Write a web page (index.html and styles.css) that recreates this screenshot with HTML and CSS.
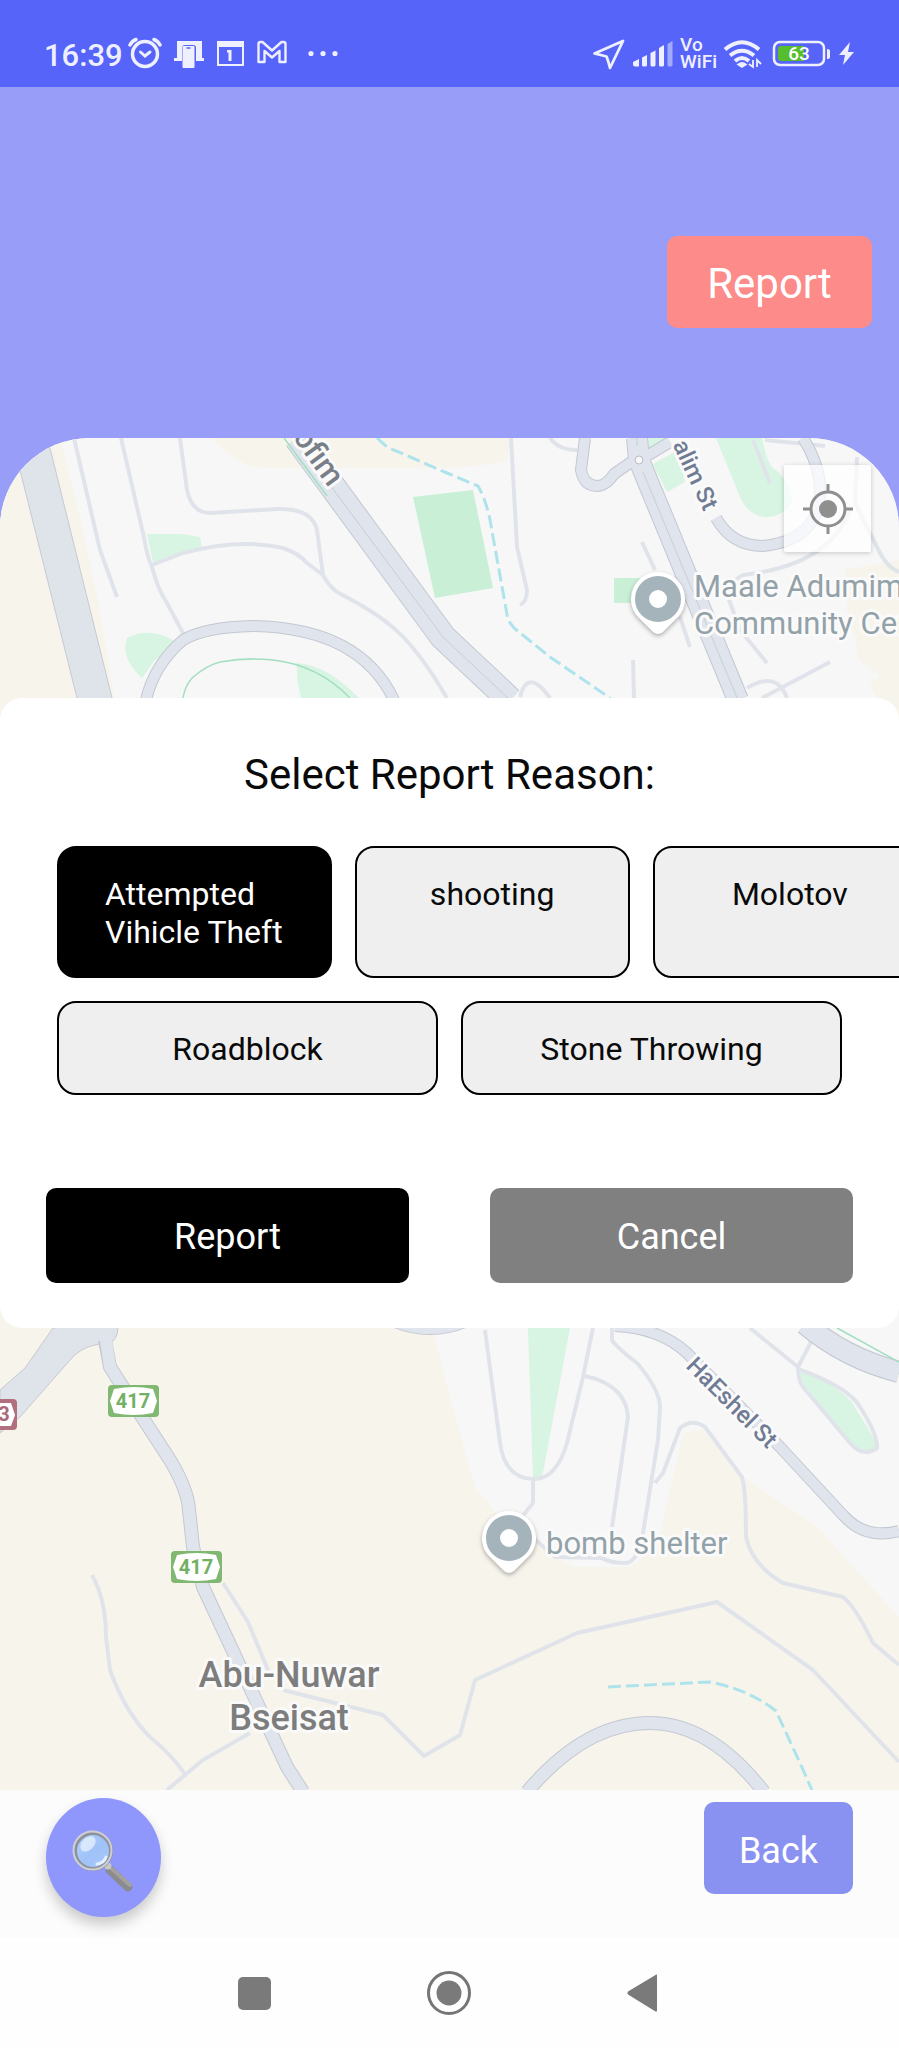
FILE: index.html
```html
<!DOCTYPE html>
<html lang="en">
<head>
<meta charset="utf-8">
<meta name="viewport" content="width=device-width, initial-scale=1">
<title>Report</title>
<link rel="stylesheet" href="styles.css">
</head>
<body>
<div class="screen">
  <div class="status">
    <div class="status-group">
      <span class="clock">16:39</span>
      <svg class="ic" width="34" height="34" viewBox="0 0 34 34" fill="none" stroke="currentColor" stroke-linecap="round"><circle cx="17" cy="18" r="12.500" stroke-width="3.500"/><path d="M12.500 16l4.500 4 5-4" stroke-width="3"/><path d="M2 9q2-4 6-5.500M32 9q-2-4-6-5.500" stroke-width="3.500"/></svg>
      <svg class="ic" width="32" height="34" viewBox="0 0 32 34"><path fill="currentColor" d="M4 5h25v17h2v3H23v-13q0-3-3-3h-8q-3 0-3 3v13H1v-3h3z"/><rect x="9.500" y="10" width="12" height="22" rx="1" fill="currentColor"/><path d="M13.500 12h4" stroke="#5664fa" stroke-width="1.500"/></svg>
      <svg class="ic" width="30" height="34" viewBox="0 0 30 34"><path d="M2 6h25v23H2z" fill="none" stroke="currentColor" stroke-width="2"/><path d="M1 5h27v6H1zM11 14h4.500v11H12.500v-8.500H11z" fill="currentColor"/></svg>
      <svg class="ic" width="30" height="34" viewBox="0 0 30 34"><path d="M1.500 26V8q0-2 2-2h2L15 14.500 24.500 6h2q2 0 2 2v18h-6V15L15 21.500 7.500 15v11z" fill="none" stroke="currentColor" stroke-width="2.400" stroke-linejoin="round"/></svg>
      <svg class="ic dots" width="32" height="34" viewBox="0 0 32 34" fill="currentColor"><circle cx="4" cy="17.500" r="2.600"/><circle cx="16" cy="17.500" r="2.600"/><circle cx="28" cy="17.500" r="2.600"/></svg>
    </div>
    <div class="status-group tight">
      <svg class="ic" width="34" height="34" viewBox="0 0 34 34"><path d="M31 5 L2.500 17.500 Q11 19.500 14.500 20.500 Q16 24 18 32 Z" fill="none" stroke="currentColor" stroke-width="2.800" stroke-linejoin="round"/></svg>
      <svg class="ic" width="40" height="34" viewBox="0 0 40 34" fill="currentColor"><path d="M0 26q4-2 6-3v7.500H2q-2 0-2-2zM9 21.500l5-2.500v10q0 1.500-1.500 1.500h-2Q9 30.500 9 29zM17.500 17l5-2.500V29q0 1.500-1.500 1.500h-2q-1.500 0-1.500-1.500zM26 12l5-3v20q0 1.500-1.500 1.500h-2Q26 30.500 26 29z"/><path opacity=".5" d="M34.500 8l5-3v24q0 1.500-1.500 1.500h-2q-1.500 0-1.500-1.500z"/></svg>
      <span class="vowifi"><span>Vo</span><span>WiFi</span></span>
      <svg class="ic" width="42" height="34" viewBox="0 0 42 34" fill="none" stroke="currentColor" stroke-width="4"><path d="M3 13.500Q20 -1 37 13.500M8 19.500q12-9.500 24 0M13 25q7-6 14 0"/><path d="M14.500 28.500q5.500-5 11 0L20 32z" fill="currentColor" stroke="none"/><path d="M31 24v7l-4-3M35 31v-7l4 4" stroke-width="1.800"/></svg>
      <svg class="ic" width="60" height="34" viewBox="0 0 60 34"><rect x="3" y="6" width="50" height="23" rx="6" fill="none" stroke="currentColor" stroke-width="2.500"/><path d="M33 10H10q-3 0-3 3v9q0 3 3 3h23z" fill="#56bd2c"/><path d="M56 13q3 0 3 2v6q0 2-3 2z" fill="currentColor"/><text class="batt" x="28" y="24" text-anchor="middle">63</text></svg>
      <svg class="ic" width="17" height="34" viewBox="0 0 17 34"><path d="M12 6L1 19h6L5 29 16 16h-6z" fill="currentColor"/></svg>
    </div>
  </div>

  <header class="top">
    <button class="btn btn-alert" type="button">Report</button>
  </header>

  <main class="map-area">
    <svg class="map" viewBox="0 438 899 1352" preserveAspectRatio="xMidYMin slice" role="img" aria-label="Map">
      <rect y="438" width="899" height="1352" fill="#f7f7f7"/>
      <g fill="#f7f4ec">
        <path d="M0 438H60L76 500 98 600 118 720 110 1328H433L450 1397 475 1487 507 1527 573 1567H630L657 1547 677 1460 683 1433 703 1430 743 1477 817 1527 899 1617V1790H0z"/>
        <path d="M213 438q20 25 47 30h180q60-2 68-10l2-20zM845 570l54-10v170h-20l-1-30-8-15 10-10-22-15-2-20-8-20z"/>
      </g>
      <g fill="#d8f4e2">
        <path d="M147 534h35l18 3 2 12-49 14zM142 678q-22-20-15-40 22-12 48 3l-6 8-15 12zM297 663q30 2 62 35h-58q-5-20-4-35zM647 438h18l5 5-20 10zM653 464l25-14 7 32-18 10zM716 438h46q6 30 14 32 14 12 16 32-10 16-28 15-16-2-24-20zM528 1328h42l-28 150h-9zM798 1369q35 14 53 32l26 42q-3 10-14 10-8-2-13-10l-46-58z"/>
      </g>
      <path d="M413 497l60-7 20 98-58 10zM614 578h26v25h-26z" fill="#c9efd7"/>

      <g class="lane">
        <path d="M74 438L100 550 117 597M121 438L143 533Q148 560 152 567 158 590 167 603L184 635M180 438L187 490Q192 513 210 513L277 509Q312 508 317 530L323 575Q328 585 337 592C390 620 410 635 447 698M152 565L183 553Q240 538 283 548 300 554 307 563L323 575"/>
        <path d="M511 438L517 547 527 590Q527 602 520 605M550 438q8 12 27 12M753 440l17 43M765 440l60 6M857 457l-2 46 25 50q8 15 19 19M850 510q-20 55-107 65-15 8-15 22l12 33 27 33M642 542l13 28M680 617l10 30M633 660l1 38M520 697q8-30 30 1M830 662l-68 36M747 688q30-18 40 10"/>
        <path d="M92 1575Q106 1600 106 1637L110 1670Q125 1712 150 1737 172 1755 184 1773M167 1790L203 1760 250 1733M223 1583L248 1622 270 1675M283 1690L383 1715 424 1756 460 1735 475 1680 577 1633 717 1602 813 1670 899 1762"/>
        <path d="M655 1483L663 1473 680 1428Q692 1418 705 1427L742 1477Q746 1490 746 1537 752 1565 783 1583L843 1597Q855 1606 873 1643L899 1665M485 1330L500 1443Q505 1478 533 1479 556 1480 567 1443L583 1377 593 1328M585 1376Q626 1385 628 1417L612 1527M612 1328v12Q616 1347 637 1363 660 1390 660 1407L658 1440 643 1533Q638 1563 625 1563 610 1563 602 1558L555 1557 530 1535M533 1480v23l-12 15M750 1328L798 1367 812 1340M798 1367Q798 1380 803 1387L850 1443Q863 1458 877 1448 878 1435 860 1407 850 1388 798 1369"/>
      </g>

      <path d="M12 438L22 478 77 698 83 720H118L112 698 51 452 47 438zM53 1328L25 1368 0 1390V1433L20 1417 70 1360Q80 1348 95 1345L113 1341Q119 1336 118 1320z" fill="#dfe4eb" stroke="#c6cad0" stroke-width="1"/>

      <g class="road-edge">
        <path class="w12" d="M146 700Q154 665 183 640 205 627 253 626 360 628 394 700"/>
        <path class="w27" d="M297 438L443 637 510 700"/>
        <path class="w12" d="M585 438L581 470Q584 486 597 486 606 486 614 474L637 458M640 460l30-18M716 518Q732 546 763 546 820 540 820 490 820 465 803 438"/>
        <path class="w20" d="M637 438L639 460 738 700"/>
        <path class="w14" d="M105 1340L110 1367 133 1403 170 1460Q188 1490 189 1510L193 1547 203 1587 287 1767 303 1792"/>
        <path class="w14" d="M527 1792Q585 1723 650 1723 710 1723 764 1792"/>
        <path class="w12" d="M615 1326Q660 1328 687 1353L780 1447 843 1515Q865 1540 899 1531M395 1322q35 14 70 0"/>
        <path class="w20" d="M805 1324Q845 1358 899 1372"/>
      </g>
      <g class="road">
        <path class="w12" d="M146 700Q154 665 183 640 205 627 253 626 360 628 394 700"/>
        <path class="w27" d="M297 438L443 637 510 700"/>
        <path class="w12" d="M585 438L581 470Q584 486 597 486 606 486 614 474L637 458M640 460l30-18M716 518Q732 546 763 546 820 540 820 490 820 465 803 438"/>
        <path class="w20" d="M637 438L639 460 738 700"/>
        <path class="w14" d="M105 1334L110 1367 133 1403 170 1460Q188 1490 189 1510L193 1547 203 1587 287 1767 303 1792"/>
        <path class="w14" d="M527 1792Q585 1723 650 1723 710 1723 764 1792"/>
        <path class="w12" d="M615 1326Q660 1328 687 1353L780 1447 843 1515Q865 1540 899 1531M395 1322q35 14 70 0"/>
        <path class="w20" d="M805 1324Q845 1358 899 1372"/>
      </g>
      <path d="M330 485L443 637 510 700M643 472L738 700M637 438v8" fill="none" stroke="#c9cdd5"/>
      <circle cx="639" cy="460" r="4" fill="#f7f7f7" stroke="#b9bdc6"/>
      <path d="M183 698q2-12 9-20 15-13 28-16 28-5 53-2 45 5 77 38M284 438l43 58M837 1328l62 34" fill="none" stroke="#a3dfc0" stroke-width="1.500"/>
      <path d="M377 438L387 447 447 473 478 486Q486 500 490 520L508 620 514 628 550 657 610 698M608 1687L710 1682Q750 1690 776 1711L800 1763 812 1790" fill="none" stroke="#aee3ec" stroke-width="3" stroke-dasharray="13 5"/>

      <g class="pins">
        <path class="pin" d="M658 572a27 27 0 0 1 21 44l-16 16q-5 4-10 0l-16-16a27 27 0 0 1 21-44z"/><circle cx="658" cy="599" r="16" fill="#fff" stroke="#a5b3bb" stroke-width="14"/>
        <path class="pin" d="M509 1511a27 27 0 0 1 21 44l-16 16q-5 4-10 0l-16-16a27 27 0 0 1 21-44z"/><circle cx="509" cy="1538" r="16" fill="#fff" stroke="#a5b3bb" stroke-width="14"/>
      </g>

      <g class="label">
        <text class="poi" x="694" y="597">Maale Adumim</text>
        <text class="poi" x="694" y="634">Community Center</text>
        <text class="poi" x="546" y="1554">bomb shelter</text>
        <text class="town" x="289" y="1687" text-anchor="middle">Abu-Nuwar</text>
        <text class="town" x="289" y="1730" text-anchor="middle">Bseisat</text>
        <text class="street avenue" transform="translate(329 488) rotate(54)" text-anchor="end">ofim</text>
        <text class="street" transform="translate(704 512) rotate(65)" text-anchor="end">alim St</text>
        <text class="street" transform="translate(685 1367) rotate(45)">HaEshel St</text>
      </g>

      <g class="shield">
        <rect x="108" y="1385" width="51" height="32" rx="4" fill="#80b771"/><path d="M114 1389q20-4 39 0l4 12-4 12q-19 4-39 0l-4-12z" fill="#fff"/><text x="133" y="1408" fill="#74b064">417</text>
        <rect x="171" y="1551" width="51" height="32" rx="4" fill="#80b771"/><path d="M177 1555q20-4 39 0l4 12-4 12q-19 4-39 0l-4-12z" fill="#fff"/><text x="196" y="1574" fill="#74b064">417</text>
        <rect x="-20" y="1399" width="37" height="31" rx="4" fill="#b0707f"/><path d="M-14 1403h25l4 12-4 11h-25z" fill="#fff"/><text x="4" y="1421" fill="#a96978">3</text>
      </g>
    </svg>

    <button class="locate" type="button" aria-label="My location">
      <svg width="50" height="50" viewBox="0 0 50 50" fill="none" stroke="#8f8f8f" stroke-width="3"><circle cx="25" cy="25" r="17"/><circle cx="25" cy="25" r="9" fill="#8f8f8f" stroke="none"/><path d="M25 0v8M25 42v8M0 25h8M42 25h8"/></svg>
    </button>

    <section class="dialog" role="dialog" aria-labelledby="dialog-title">
      <h1 class="dialog-title" id="dialog-title">Select Report Reason:</h1>
      <div class="reasons">
        <div class="row scroll">
          <button class="reason selected" type="button"><span>Attempted Vihicle Theft</span></button>
          <button class="reason" type="button"><span>shooting</span></button>
          <button class="reason" type="button"><span>Molotov</span></button>
        </div>
        <div class="row">
          <button class="reason" type="button"><span>Roadblock</span></button>
          <button class="reason" type="button"><span>Stone Throwing</span></button>
        </div>
      </div>
      <div class="actions">
        <button class="btn btn-submit" type="button">Report</button>
        <button class="btn btn-cancel" type="button">Cancel</button>
      </div>
    </section>
  </main>

  <footer class="tools">
    <button class="search" type="button" aria-label="Search">
      <svg width="115" height="119" viewBox="0 0 115 119">
        <defs><linearGradient id="glass" x1="0" y1="0" x2="1" y2="1"><stop offset="0" stop-color="#b9d6fb"/><stop offset=".5" stop-color="#9fc2f8"/><stop offset="1" stop-color="#a9c8fa"/></linearGradient></defs>
        <path d="M64 72L82 89" stroke="#8b8b8d" stroke-width="9" stroke-linecap="round"/>
        <path d="M66 71L84 87" stroke="#a3a1a0" stroke-width="4" stroke-linecap="round"/>
        <circle cx="62" cy="68" r="3.500" fill="#c9c9cc"/>
        <circle cx="47" cy="53" r="18" fill="url(#glass)" stroke="#8e929b" stroke-width="4"/>
        <circle cx="46.500" cy="52.500" r="19" fill="none" stroke="#ced0d6" stroke-width="2"/>
        <ellipse cx="42" cy="46" rx="9" ry="6" transform="rotate(-45 42 46)" fill="#e3effe" opacity=".8"/>
        <path d="M51 66q7-1 9-7" stroke="#e3effe" stroke-width="3" fill="none" stroke-linecap="round"/>
      </svg>
    </button>
    <button class="btn btn-back" type="button">Back</button>
  </footer>

  <nav class="sysnav">
    <button type="button" aria-label="Recent apps"><svg width="44" height="44" viewBox="0 0 44 44"><rect x="5" y="6" width="33" height="33" rx="5" fill="#7a7a7a"/></svg></button>
    <button type="button" aria-label="Home"><svg width="44" height="44" viewBox="0 0 44 44"><circle cx="22" cy="22" r="20.500" fill="none" stroke="#757575" stroke-width="3"/><circle cx="22" cy="22" r="12.500" fill="#7a7a7a"/></svg></button>
    <button type="button" aria-label="Go back"><svg width="44" height="44" viewBox="0 0 44 44"><path d="M36 4.500v35q0 1.500-1.500 1L7 23.500q-1.500-1.500 0-3L34.500 4q1.500-1 1.500.5z" fill="#7a7a7a"/></svg></button>
  </nav>
</div>
</body>
</html>
```
FILE: styles.css
```css
* {
  box-sizing: border-box;
}

body {
  margin: 0;
  background: #fefefe;
  font-family: Roboto, "Liberation Sans", sans-serif;
}

button {
  font: inherit;
  border: 0;
  padding: 0;
  cursor: pointer;
}

svg {
  display: block;
}

.screen {
  display: flex;
  flex-direction: column;
  min-height: 100vh;
  background: #989ef8;
}

.status {
  display: flex;
  justify-content: space-between;
  align-items: center;
  padding: 36px 44px 17px 44px;
  background: #5664fa;
  color: #eef0ff;
}

.status-group {
  display: flex;
  align-items: center;
  gap: 11px;
}

.status-group.tight {
  gap: 7px;
}

.ic {
  flex: none;
}

.clock {
  margin-right: -6px;
  font-size: 31px;
  font-weight: 500;
  line-height: 36px;
  padding-top: 2px;
  margin-bottom: -4px;
}

.dots {
  margin-left: 9px;
}

.vowifi {
  display: flex;
  flex-direction: column;
  margin-right: -2px;
  font-size: 19px;
  font-weight: 500;
  line-height: 17px;
}

.batt {
  font-size: 19px;
  font-weight: 500;
  fill: #fff;
}

.top {
  display: flex;
  justify-content: flex-end;
  padding: 149px 27px 110px;
}

.btn {
  height: 92px;
  padding-top: 2px;
  border-radius: 10px;
  color: #fff;
}

.btn-alert {
  width: 205px;
  background: #fc8b8a;
  font-size: 42px;
}

.map-area {
  position: relative;
  overflow: hidden;
  border-radius: 90px 90px 0 0;
  background: #f7f4ec;
}

.map {
  width: 100%;
  height: auto;
}

.lane {
  fill: none;
  stroke: #e0e4ea;
  stroke-width: 4px;
  stroke-linejoin: round;
}

.road,
.road-edge {
  fill: none;
  stroke-linejoin: round;
}

.road {
  stroke: #dfe4ed;
}

.road-edge {
  stroke: #c3c8d1;
}

.road .w12 { stroke-width: 10px; }
.road .w14 { stroke-width: 12px; }
.road .w20 { stroke-width: 20px; }
.road .w27 { stroke-width: 25px; }
.road-edge .w12 { stroke-width: 12px; }
.road-edge .w14 { stroke-width: 14px; }
.road-edge .w20 { stroke-width: 22px; }
.road-edge .w27 { stroke-width: 27px; }

.pin {
  fill: #fff;
  filter: drop-shadow(0 2px 2px rgba(0, 0, 0, 0.3));
}

.label text {
  stroke: #fafafa;
  stroke-width: 6px;
  stroke-linejoin: round;
  paint-order: stroke;
}

.label .poi {
  font-size: 31px;
  fill: #93a1a8;
}

.label .town {
  font-size: 36px;
  font-weight: 500;
  fill: #7d7d7d;
}

.label .street {
  font-size: 24px;
  font-weight: 500;
  fill: #707b94;
}

.label .avenue {
  font-size: 31px;
  fill: #787f88;
}

.shield text {
  font-size: 20px;
  font-weight: 700;
  text-anchor: middle;
}

.locate {
  position: absolute;
  top: 27px;
  right: 28px;
  display: grid;
  place-items: center;
  width: 87px;
  height: 87px;
  border-radius: 2px;
  background: rgba(255, 255, 255, 0.7);
  box-shadow: 0 1px 5px rgba(0, 0, 0, 0.2);
}

.dialog {
  position: absolute;
  top: 260px;
  left: 0;
  right: 0;
  padding: 52px 0 45px;
  overflow: hidden;
  border-radius: 22px;
  background: #fff;
}

.dialog-title {
  margin: 0 0 46px;
  color: #0a0a0a;
  font-size: 42px;
  font-weight: 400;
  line-height: 50px;
  text-align: center;
}

.reasons {
  display: grid;
  gap: 23px;
  padding: 0 57px;
}

.row {
  display: flex;
  gap: 23px;
  min-width: 0;
}

.reason {
  display: flex;
  flex: 1;
  justify-content: center;
  align-items: flex-start;
  padding: 27px 46px 25px;
  border: 2px solid #000;
  border-radius: 19px;
  background: #efefef;
  color: #0a0a0a;
  font-size: 32px;
  line-height: 38px;
  text-align: left;
}

.scroll .reason {
  flex: 0 0 35%;
}

.reason.selected {
  background: #000;
  color: #fff;
}

.actions {
  display: flex;
  gap: 81px;
  margin-top: 93px;
  padding: 0 46px;
}

.actions .btn {
  flex: 1;
  height: 95px;
  font-size: 36px;
}

.btn-submit {
  background: #000;
}

.btn-cancel {
  background: #808080;
}

.tools {
  display: flex;
  justify-content: space-between;
  align-items: flex-start;
  padding: 8px 46px 21px;
  background: #fcfcfc;
}

.search {
  width: 115px;
  height: 119px;
  border-radius: 50%;
  background: #8f97fd;
  box-shadow: 0 8px 14px rgba(0, 0, 0, 0.2);
}

.btn-back {
  width: 149px;
  margin-top: 4px;
  padding-top: 6px;
  background: #8991f1;
  font-size: 36px;
}

.sysnav {
  display: flex;
  flex: 1;
  justify-content: center;
  align-items: center;
  gap: 150px;
  min-height: 110px;
  padding-right: 2px;
  background: #fefefe;
}

.sysnav button {
  background: none;
}
```
